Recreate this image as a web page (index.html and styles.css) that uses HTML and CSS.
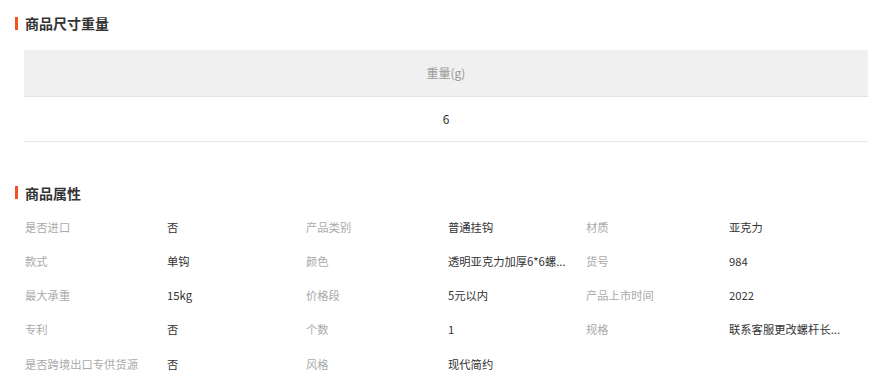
FILE: index.html
```html
<!DOCTYPE html>
<html>
<head>
	<meta charset="utf-8">
	<meta name="viewport" content="width=device-width, initial-scale=1">
	<title>商品详情</title>

	<link rel="stylesheet" href="styles.css">
</head>
<body>

	<div class="detail">
		<h3 class="section-title">商品尺寸重量</h3>
		<table class="size-table">
			<thead>
				<tr><th>重量(g)</th></tr>
			</thead>
			<tbody>
				<tr><td>6</td></tr>
			</tbody>
		</table>

		<h3 class="section-title attr-title">商品属性</h3>
		<div class="attr-grid">
			<span class="attr-name">是否进口</span><span class="attr-value">否</span>
			<span class="attr-name">产品类别</span><span class="attr-value">普通挂钩</span>
			<span class="attr-name">材质</span><span class="attr-value">亚克力</span>

			<span class="attr-name">款式</span><span class="attr-value">单钩</span>
			<span class="attr-name">颜色</span><span class="attr-value">透明亚克力加厚6*6螺...</span>
			<span class="attr-name">货号</span><span class="attr-value">984</span>

			<span class="attr-name">最大承重</span><span class="attr-value">15kg</span>
			<span class="attr-name">价格段</span><span class="attr-value">5元以内</span>
			<span class="attr-name">产品上市时间</span><span class="attr-value">2022</span>

			<span class="attr-name">专利</span><span class="attr-value">否</span>
			<span class="attr-name">个数</span><span class="attr-value">1</span>
			<span class="attr-name">规格</span><span class="attr-value">联系客服更改螺杆长...</span>

			<span class="attr-name">是否跨境出口专供货源</span><span class="attr-value">否</span>
			<span class="attr-name">风格</span><span class="attr-value">现代简约</span>
		</div>
	</div>

</body>
</html>
```

FILE: styles.css
```css
*{
	margin: 0;
	padding: 0;
	box-sizing: border-box;
}
body{
	background: #fff;
	font-family: "Noto Sans CJK SC", "Noto Sans", sans-serif;
	font-size: 12px;
	color: #333;
}
.detail{
	padding-top: 13px;
}
.section-title{
	display: flex;
	align-items: center;
	margin-left: 15px;
	font-size: 14px;
	line-height: 20px;
	font-weight: bold;
	color: #333;
}
.section-title::before{
	content: "";
	width: 3px;
	height: 13px;
	margin-right: 7px;
	background: #f4511e;
}
.size-table{
	margin: 17px 0 0 24px;
	width: 844px;
	border-collapse: collapse;
}
.size-table th{
	height: 46px;
	background: #f0f0f0;
	border-bottom: 1px solid #e3e3e3;
	font-weight: normal;
	color: #999;
	text-align: center;
}
.size-table td{
	height: 45px;
	border-bottom: 1px solid #e8e8e8;
	text-align: center;
	color: #333;
}
.attr-title{
	margin-top: 41px;
}
.attr-grid{
	display: grid;
	grid-template-columns: 142px 139px 142px 138px 143px 1fr;
	grid-auto-rows: 34.25px;
	align-items: center;
	margin: 7px 0 0 25px;
	font-size: 11.3px;
}
.attr-name{
	color: #aaa;
}
.attr-value{
	white-space: nowrap;
	color: #333;
}
```
